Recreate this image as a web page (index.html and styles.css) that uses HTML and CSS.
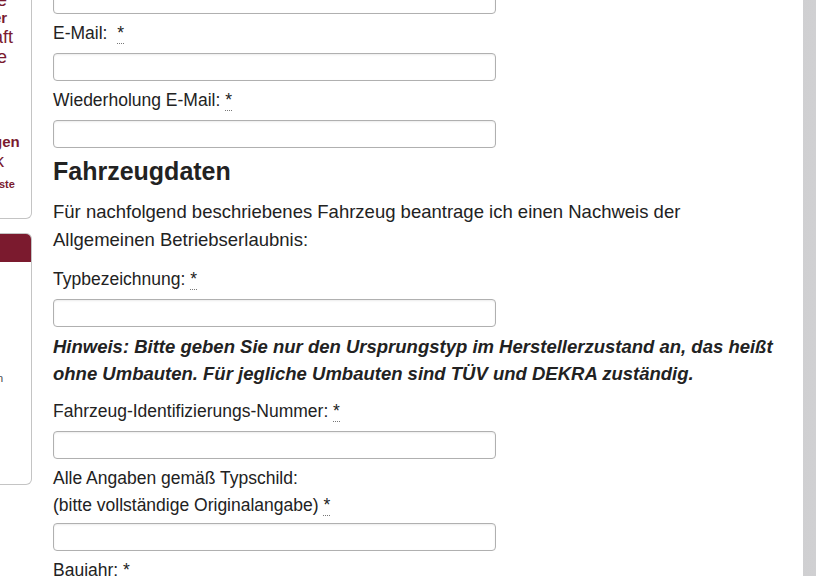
FILE: index.html
```html
<!DOCTYPE html>
<html>
<head>
    <meta charset="utf-8">
    <title>Antrag Nachweis ABE</title>
    <link rel="stylesheet" href="styles.css">
</head>
<body>
    <div class="page">
        <div class="side">
            <div class="side_box">
                <p class="s1 c3">e</p>
                <p class="s2 c7">er</p>
                <p class="s3 c7">aft</p>
                <p class="s3 c3">e</p>
                <p class="s2 c7 gap">gen</p>
                <p class="s3 c5">k</p>
                <p class="s4 c1">ste</p>
            </div>
            <div class="side_box box2">
                <div class="side_hd"></div>
                <p class="s5">n</p>
            </div>
        </div>
        <div class="main">
            <div class="form">
                <input class="inp" type="text">
                <label class="lbl">E-Mail:&nbsp; <abbr title="Pflichtfeld">*</abbr></label>
                <input class="inp" type="text">
                <label class="lbl">Wiederholung E-Mail: <abbr title="Pflichtfeld">*</abbr></label>
                <input class="inp" type="text">

                <h2>Fahrzeugdaten</h2>
                <p class="intro">Für nachfolgend beschriebenes Fahrzeug beantrage ich einen Nachweis der Allgemeinen Betriebserlaubnis:</p>

                <label class="lbl">Typbezeichnung: <abbr title="Pflichtfeld">*</abbr></label>
                <input class="inp" type="text">
                <p class="hint">Hinweis: Bitte geben Sie nur den Ursprungstyp im Herstellerzustand an, das heißt ohne Umbauten. Für jegliche Umbauten sind TÜV und DEKRA zuständig.</p>

                <label class="lbl">Fahrzeug-Identifizierungs-Nummer: <abbr title="Pflichtfeld">*</abbr></label>
                <input class="inp" type="text">
                <label class="lbl two">Alle Angaben gemäß Typschild:<br>(bitte vollständige Originalangabe) <abbr title="Pflichtfeld">*</abbr></label>
                <input class="inp" type="text">
                <label class="lbl">Baujahr: <abbr title="Pflichtfeld">*</abbr></label>
                <input class="inp" type="text">
            </div>
        </div>
    </div>
</body>
</html>
```

FILE: styles.css
```css
html, body { margin: 0; padding: 0; height: 100%; overflow: hidden; }
body { background: linear-gradient(to right, #b4b4b6, #d0d0d2); font-family: "Liberation Sans", Arial, sans-serif; color: #222; }
.page { width: 803px; height: 100%; background: #fff; display: flex; overflow: hidden; }
.side { width: 32px; flex: none; }
.side_box { border: 1px solid #c4c4c4; border-left: 0; border-radius: 0 0 6px 0; margin-top: -20px; height: 239px; overflow: hidden; color: #7a1a2f; padding-top: 11px; box-sizing: border-box; }
.side_box p { margin: 0; white-space: nowrap; }
.side_box .s1 { font-size: 18px; line-height: 16px; }
.side_box .s2 { font-size: 15px; line-height: 19px; font-weight: bold; }
.side_box .s3 { font-size: 18px; line-height: 20px; }
.side_box .s4 { font-size: 11px; line-height: 26px; font-weight: bold; }
.side_box .gap { margin-top: 65px; }
.side_box .c1 { margin-left: -1px; }
.side_box .c3 { margin-left: -3px; }
.side_box .c5 { margin-left: -5px; }
.side_box .c7 { margin-left: -7px; }
.box2 { margin-top: 14px; height: 252px; border-radius: 0 6px 6px 0; padding-top: 0; }
.side_hd { height: 28px; background: #7b1a2e; }
.side_box .s5 { font-size: 11px; color: #444; margin: 110px 0 0 -3px; }
.main { flex: 1; padding-left: 21px; }
.form { width: 724px; margin-top: -14px; }
.lbl { display: block; font-size: 17.5px; line-height: 27px; margin-bottom: 6px; }
.lbl.two { margin-bottom: 4px; }
abbr { text-decoration: none; border-bottom: 1px dotted #777; cursor: help; }
.inp { display: block; width: 443px; height: 28px; box-sizing: border-box; border: 1px solid #b0b0b0; border-radius: 4px; box-shadow: inset 0 1px 2px rgba(0,0,0,0.08); margin: 0 0 6px 0; padding: 4px 6px; font: 16px "Liberation Sans", Arial, sans-serif; }
h2 { font-size: 25px; line-height: 30px; margin: 8px 0 12px; color: #222; }
.intro { font-size: 18.5px; line-height: 28px; margin: 0 0 12px; }
.hint { font-size: 18.5px; line-height: 27px; font-weight: bold; font-style: italic; margin: 0 0 11px; }
```
